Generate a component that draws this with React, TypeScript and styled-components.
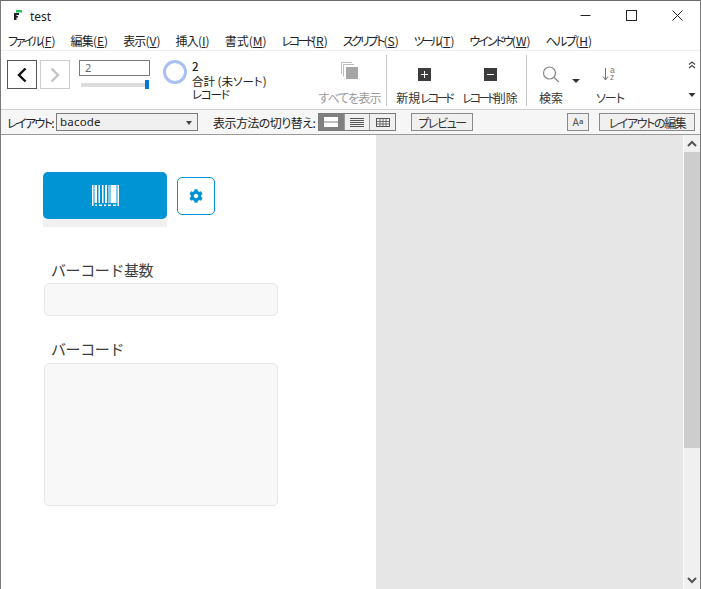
import React from "react";
import styled, { createGlobalStyle } from "styled-components";
import { FaCog } from "react-icons/fa";

const Global = createGlobalStyle`
  html, body { margin: 0; padding: 0; background: #fff; }
  body { font-family: "Noto Sans CJK JP", "Noto Sans", sans-serif; color: #222; overflow: hidden; font-feature-settings: "palt"; }
  * { box-sizing: border-box; }
`;

const Win = styled.div`
  width: 701px; height: 589px; display: flex; flex-direction: column; overflow: hidden;
  border-top: 1px solid #6b6b6b; border-left: 1px solid #7a7a7a; border-right: 1px solid #7a7a7a;
  background: #fff;
`;
const TitleBar = styled.div`
  height: 28px; display: flex; align-items: center; flex: none;
`;
const AppIcon = styled.svg`
  width: 10px; height: 10px; margin-left: 12px; margin-right: 7px;
`;
const Title = styled.span`
  font-family: "Noto Sans", sans-serif; font-size: 12px; flex: 1; margin-top: 2px;
`;
const WinBtn = styled.button`
  width: 46px; height: 28px; border: 0; background: none; padding: 0; display: flex; align-items: center; justify-content: center;
`;
const MenuBar = styled.div`
  height: 21px; display: flex; align-items: center; gap: 15px; padding: 2px 0 0 7px; flex: none;
  font-size: 12px; color: #222;
`;
const MenuItem = styled.span`
  white-space: nowrap;
  u { text-underline-offset: 1px; }
`;
const Kana = styled.span<{ $ls: number }>`
  letter-spacing: ${p => p.$ls}px;
`;
const ToolBar = styled.div`
  height: 60px; flex: none; display: flex; align-items: flex-start; background: #fff;
  border-top: 1px solid #f0f0f0; border-bottom: 1px solid #cfcfcf; position: relative;
`;
const NavGroup = styled.div`
  display: flex; gap: 3px; margin: 9px 0 0 6px;
`;
const NavBtn = styled.button<{ $off?: boolean }>`
  width: 30px; height: 29px; padding: 0; display: flex; align-items: center; justify-content: center; background: #fff;
  border: 1px solid ${p => (p.$off ? "#cdcdcd" : "#555")};
`;
const RecordBlock = styled.div`
  width: 71px; margin: 9px 0 0 9px; display: flex; flex-direction: column;
`;
const RecordInput = styled.div`
  height: 16px; border: 1px solid #7b7b7b; font-size: 11px; line-height: 14px; padding-left: 5px; color: #666; font-family: "Noto Sans", sans-serif;
`;
const Slider = styled.div`
  height: 4px; margin: 7px 1px 0 2px; background: #dcdcdc; position: relative;
`;
const Thumb = styled.div`
  position: absolute; right: 0; top: -3px; width: 4px; height: 9px; background: #0078d7;
`;
const Ring = styled.div`
  width: 24px; height: 24px; border-radius: 50%; border: 3px solid #a9c0f2; margin: 9px 0 0 13px; flex: none;
`;
const RecordText = styled.div`
  margin: 10px 0 0 5px; font-size: 11.5px; line-height: 13.5px; width: 121px; white-space: nowrap; color: #222;
`;
const RecordCount = styled.div`
  font-weight: 500; height: 13.5px; line-height: 11px;
`;
const Tool = styled.div<{ $w: number; $off?: boolean }>`
  width: ${p => p.$w}px; height: 52px; margin-top: 4px; display: flex; flex-direction: column; align-items: center;
  justify-content: flex-end; font-size: 12px; line-height: 15px; white-space: nowrap;
  color: ${p => (p.$off ? "#9a9a9a" : "#333")}; flex: none; position: relative; padding-bottom: 2px;
`;
const ToolIcon = styled.div<{ $lift?: number }>`
  height: 22px; display: flex; align-items: center; justify-content: center; margin-bottom: ${p => 5 + (p.$lift ?? 0)}px;
`;
const Sep = styled.div<{ $ml?: number }>`
  width: 1px; height: 51px; background: #c4c4c4; margin: 4px 0 0 ${p => p.$ml ?? 0}px; flex: none;
`;
const Caret = styled.div`
  position: absolute; width: 0; height: 0; border-left: 4px solid transparent; border-right: 4px solid transparent; border-top: 4px solid #333;
`;
const SearchCaret = styled(Caret)`
  left: 45px; top: 24px;
`;
const Overflow = styled.div`
  position: absolute; left: 687px; top: 10px; width: 8px; height: 36px; display: flex; flex-direction: column; justify-content: space-between; align-items: center;
`;
const LayoutBar = styled.div`
  height: 25px; flex: none; display: flex; align-items: center; background: #f6f6f6; border-bottom: 1px solid #9a9a9a;
  font-size: 12px; padding-left: 6px; color: #222; white-space: nowrap;
`;
const LayoutLabel = styled.span`
  width: 46px; flex: none; letter-spacing: -1.6px;
`;
const SelectBox = styled.div`
  width: 142px; height: 18px; border: 1px solid #7b7b7b; background: #f0f0f0; margin-left: 3px; position: relative; flex: none;
  font-family: "Noto Sans", sans-serif; font-size: 11.5px; letter-spacing: 0.2px; line-height: 15px; padding-left: 3px;
`;
const SelectCaret = styled(Caret)`
  right: 5px; top: 7px; border-left-width: 3px; border-right-width: 3px; border-top-color: #444;
`;
const ViewLabel = styled.span`
  width: 103px; flex: none; margin-left: 15px; margin-right: 2px; letter-spacing: -0.55px;
`;
const Seg = styled.div`
  display: flex; height: 18px; width: 78px; border: 1px solid #7b7b7b; flex: none;
`;
const SegBtn = styled.div<{ $on?: boolean }>`
  flex: 1; display: flex; align-items: center; justify-content: center; background: ${p => (p.$on ? "#808080" : "#f0f0f0")};
  & + & { border-left: 1px solid #9a9a9a; }
`;
const Btn = styled.div<{ $w: number; $ml: number; $ls?: number }>`
  width: ${p => p.$w}px; margin-left: ${p => p.$ml}px; height: 18px; border: 1px solid #8a8a8a; background: #f0f0f0; flex: none;
  display: flex; align-items: center; justify-content: center; font-size: 12px; color: #333; letter-spacing: ${p => p.$ls ?? 0}px;
`;
const Small = styled.span`
  font-family: "Noto Sans", sans-serif; font-size: 10px; color: #555; display: flex; align-items: flex-start; line-height: 10px;
`;
const SmallA = styled.span`
  font-size: 7.5px; line-height: 8px; font-weight: 600;
`;
const Main = styled.div`
  flex: 1; display: flex; min-height: 0;
`;
const Form = styled.div`
  width: 375px; flex: none; background: #fff; padding: 37px 0 0 42px;
`;
const TopRow = styled.div`
  display: flex; align-items: flex-start; gap: 10px;
`;
const BarcodeWrap = styled.div`
  width: 124px; height: 55px; background: #f0f0f0; border-radius: 5px 5px 0 0;
`;
const BarcodeBtn = styled.div`
  width: 124px; height: 47px; background: #0094d4; border-radius: 5px; display: flex; align-items: center; justify-content: center;
`;
const GearBtn = styled.div`
  width: 38px; height: 38px; margin-top: 5px; border: 1px solid #0094d4; border-radius: 5px; color: #0094d4; background: #fff;
  display: flex; align-items: center; justify-content: center; font-size: 14px;
`;
const FieldLabel = styled.div<{ $mt: number }>`
  margin: ${p => p.$mt}px 0 0 8px; font-size: 15px; line-height: 22px; color: #3c3c3c; font-feature-settings: normal; letter-spacing: -0.4px;
`;
const Field = styled.div<{ $h: number; $mt: number }>`
  width: 234px; height: ${p => p.$h}px; margin: ${p => p.$mt}px 0 0 1px; background: #f8f8f8; border: 1px solid #e6e6e6; border-radius: 5px;
`;
const Gray = styled.div`
  flex: 1; background: #e6e6e6;
`;
const Scroll = styled.div`
  width: 17px; flex: none; background: #f0f0f0; border-left: 1px solid #fafafa; display: flex; flex-direction: column; align-items: center;
`;
const ScrollEnd = styled.div`
  height: 17px; width: 100%; flex: none; display: flex; align-items: center; justify-content: center; background: #f0f0f0;
`;
const ScrollThumb = styled.div`
  width: 100%; height: 296px; background: #cdcdcd; flex: none;
`;
const ScrollFill = styled.div`
  flex: 1;
`;

const menus: [string, string, number][] = [
  ["ファイル", "F", -2.2], ["編集", "E", -0.8], ["表示", "V", -0.8], ["挿入", "I", -0.8], ["書式", "M", 0], ["レコード", "R", -3.2],
  ["スクリプト", "S", -2.2], ["ツール", "T", -2.9], ["ウインドウ", "W", -2], ["ヘルプ", "H", -1.6],
];

const Chev = ({ up, color = "#555" }: { up?: boolean; color?: string }) => (
  <svg width="10" height="7" viewBox="0 0 10 7">
    <path d={up ? "M1 6 L5 2 L9 6" : "M1 1 L5 5 L9 1"} fill="none" stroke={color} strokeWidth="2" />
  </svg>
);

export default function App() {
  return (
    <Win>
      <Global />
      <TitleBar>
        <AppIcon viewBox="0 0 10 10">
          <rect x="1" y="3" width="5" height="2" fill="#222" />
          <rect x="1" y="3" width="2.5" height="7" fill="#222" />
          <rect x="1" y="6" width="4" height="1.6" fill="#222" />
          <rect x="3" y="0" width="6" height="2.5" fill="#22c55e" />
        </AppIcon>
        <Title>test</Title>
        <WinBtn>
          <svg width="11" height="11" viewBox="0 0 11 11"><path d="M0.5 5.5H10.5" stroke="#222" /></svg>
        </WinBtn>
        <WinBtn>
          <svg width="11" height="11" viewBox="0 0 11 11"><rect x="0.5" y="0.5" width="10" height="10" fill="none" stroke="#222" /></svg>
        </WinBtn>
        <WinBtn>
          <svg width="11" height="11" viewBox="0 0 11 11"><path d="M0.5 0.5L10.5 10.5M10.5 0.5L0.5 10.5" stroke="#222" /></svg>
        </WinBtn>
      </TitleBar>
      <MenuBar>
        {menus.map(([n, k, ls]) => (
          <MenuItem key={k}><Kana $ls={ls}>{n}</Kana>(<u>{k}</u>)</MenuItem>
        ))}
      </MenuBar>
      <ToolBar>
        <NavGroup>
          <NavBtn>
            <svg width="12" height="16" viewBox="0 0 12 16"><path d="M9.5 1.5 L3 8 L9.5 14.5" fill="none" stroke="#111" strokeWidth="2.4" /></svg>
          </NavBtn>
          <NavBtn $off>
            <svg width="12" height="16" viewBox="0 0 12 16"><path d="M2.5 1.5 L9 8 L2.5 14.5" fill="none" stroke="#c4c4c4" strokeWidth="2.4" /></svg>
          </NavBtn>
        </NavGroup>
        <RecordBlock>
          <RecordInput>2</RecordInput>
          <Slider><Thumb /></Slider>
        </RecordBlock>
        <Ring />
        <RecordText>
          <RecordCount>2</RecordCount>
          合計 (未ソート)<br />
          <Kana $ls={-1.2}>レコード</Kana>
        </RecordText>
        <Tool $w={73} $off>
          <ToolIcon $lift={3}>
            <svg width="17" height="18" viewBox="0 0 17 18">
              <path d="M0.5 12V0.5H11" fill="none" stroke="#bdbdbd" />
              <path d="M2.5 14.5V2.5H13" fill="none" stroke="#bdbdbd" />
              <rect x="5" y="5" width="12" height="12" fill="#a6a6a6" />
            </svg>
          </ToolIcon>
          <Kana $ls={-0.9}>すべてを表示</Kana>
        </Tool>
        <Sep />
        <Tool $w={74}>
          <ToolIcon>
            <svg width="13" height="13" viewBox="0 0 13 13"><rect width="13" height="13" fill="#3c3c3c" /><path d="M6.5 3V10M3 6.5H10" stroke="#fff" /></svg>
          </ToolIcon>
          <span><Kana $ls={0}>新規</Kana><Kana $ls={-2.9}>レコード</Kana></span>
        </Tool>
        <Tool $w={58}>
          <ToolIcon>
            <svg width="13" height="13" viewBox="0 0 13 13"><rect width="13" height="13" fill="#3c3c3c" /><path d="M3 6.5H10" stroke="#fff" /></svg>
          </ToolIcon>
          <span><Kana $ls={-2.9}>レコード</Kana>削除</span>
        </Tool>
        <Sep $ml={7} />
        <Tool $w={48}>
          <ToolIcon>
            <svg width="20" height="18" viewBox="0 0 20 18">
              <circle cx="8.5" cy="8" r="6" fill="none" stroke="#888" strokeWidth="1.2" />
              <path d="M13 12.5 L18 17" stroke="#888" strokeWidth="1.3" />
            </svg>
          </ToolIcon>
          検索
          <SearchCaret />
        </Tool>
        <Tool $w={70}>
          <ToolIcon>
            <svg width="16" height="16" viewBox="0 0 16 16">
              <path d="M3.5 2V13.5M1 10.5L3.5 14L6 10.5" fill="none" stroke="#777" strokeWidth="1" />
              <text x="8" y="7" fontSize="8.5" fontFamily="Liberation Sans" fill="#777">a</text>
              <text x="8" y="14" fontSize="8.5" fontFamily="Liberation Sans" fill="#777">z</text>
            </svg>
          </ToolIcon>
          <Kana $ls={-1}>ソート</Kana>
        </Tool>
        <Overflow>
          <svg width="8" height="8" viewBox="0 0 8 8"><path d="M1 3.5L4 1L7 3.5M1 7L4 4.5L7 7" fill="none" stroke="#444" strokeWidth="1.2" /></svg>
          <svg width="8" height="4" viewBox="0 0 8 4"><path d="M0.5 0H7.5L4 4Z" fill="#333" /></svg>
        </Overflow>
      </ToolBar>
      <LayoutBar>
        <LayoutLabel>レイアウト:</LayoutLabel>
        <SelectBox>bacode<SelectCaret /></SelectBox>
        <ViewLabel>表示方法の切り替え:</ViewLabel>
        <Seg>
          <SegBtn $on>
            <svg width="14" height="10" viewBox="0 0 14 10"><rect x="0" y="0" width="14" height="4.5" fill="#fff" /><rect x="0" y="5.5" width="14" height="4.5" fill="#fff" /></svg>
          </SegBtn>
          <SegBtn>
            <svg width="14" height="9" viewBox="0 0 14 9"><path d="M0 .5H14M0 2.5H14M0 4.5H14M0 6.5H14M0 8.5H14" stroke="#555" /></svg>
          </SegBtn>
          <SegBtn>
            <svg width="14" height="9" viewBox="0 0 14 9"><rect x=".5" y=".5" width="13" height="8" fill="none" stroke="#555" /><path d="M0 3.5H14M0 6H14M4 0V9M7 0V9M10 0V9" stroke="#555" strokeWidth=".8" /></svg>
          </SegBtn>
        </Seg>
        <Btn $w={62} $ml={15} $ls={-1.4}>プレビュー</Btn>
        <Btn $w={22} $ml={94}><Small>A<SmallA>a</SmallA></Small></Btn>
        <Btn $w={96} $ml={10} $ls={-1.4}>レイアウトの編集</Btn>
      </LayoutBar>
      <Main>
        <Form>
          <TopRow>
            <BarcodeWrap>
              <BarcodeBtn>
                <svg width="27" height="21" viewBox="0 0 27 21" fill="#fff">
                  <path d="M0 0h1.5v21H0zM2.5 0H5v18H2.5zM6.5 0H8v18H6.5zM10 0h1.5v18H10zM13 0h2v18h-2zM16.5 0H17.5v18H16.5zM18.5 0h6V18h-6zM25.5 0H27v21h-1.5z" />
                  <path d="M3 19.5h2V21H3zM7 19.5h3V21H7zM12 19.5h2V21h-2zM16 19.5h3V21h-3zM21 19.5h3V21h-3z" />
                </svg>
              </BarcodeBtn>
            </BarcodeWrap>
            <GearBtn><FaCog /></GearBtn>
          </TopRow>
          <FieldLabel $mt={32}>バーコード基数</FieldLabel>
          <Field $h={33} $mt={2} />
          <FieldLabel $mt={22}>バーコード</FieldLabel>
          <Field $h={143} $mt={3} />
        </Form>
        <Gray />
        <Scroll>
          <ScrollEnd><Chev up /></ScrollEnd>
          <ScrollThumb />
          <ScrollFill />
          <ScrollEnd><Chev /></ScrollEnd>
        </Scroll>
      </Main>
    </Win>
  );
}
